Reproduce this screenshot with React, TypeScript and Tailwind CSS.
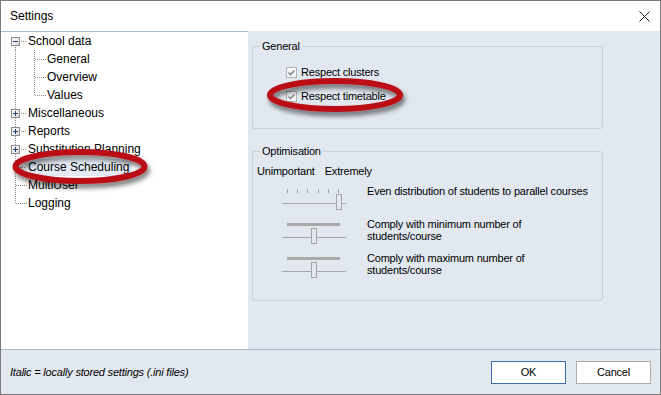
import React from 'react';

type TreeRow = {
  label: string;
  level: 0 | 1;
  box?: 'plus' | 'minus';
  first?: boolean;
  last?: boolean;
  lastChild?: boolean;
  selected?: boolean;
};

const rows: TreeRow[] = [
  { label: 'School data', level: 0, box: 'minus', first: true },
  { label: 'General', level: 1 },
  { label: 'Overview', level: 1 },
  { label: 'Values', level: 1, lastChild: true },
  { label: 'Miscellaneous', level: 0, box: 'plus' },
  { label: 'Reports', level: 0, box: 'plus' },
  { label: 'Substitution Planning', level: 0, box: 'plus' },
  { label: 'Course Scheduling', level: 0, selected: true },
  { label: 'MultiUser', level: 0 },
  { label: 'Logging', level: 0, last: true },
];

const DOT = '#8f8f8f';

// connector lines and +/- box for one tree row
const Gutter = ({ row }: { row: TreeRow }) => {
  const w = row.level === 0 ? 24 : 43;
  let vTop = 0;
  let vBottom = 18;
  if (row.level === 0 && row.first) vTop = 13;
  if (row.level === 0 && row.last) vBottom = 9;
  return (
    <svg width={w} height={18} className="shrink-0 overflow-visible" shapeRendering="crispEdges">
      <line x1={14.5} y1={vTop} x2={14.5} y2={vBottom} stroke={DOT} strokeDasharray="1 1" />
      {row.level === 0 ? (
        <line x1={row.box ? 18 : 15} y1={9.5} x2={26} y2={9.5} stroke={DOT} strokeDasharray="1 1" />
      ) : (
        <>
          <line x1={33.5} y1={0} x2={33.5} y2={row.lastChild ? 10 : 18} stroke={DOT} strokeDasharray="1 1" />
          <line x1={34} y1={9.5} x2={45} y2={9.5} stroke={DOT} strokeDasharray="1 1" />
        </>
      )}
      {row.box && (
        <>
          <defs>
            <linearGradient id="bx" x1="0" y1="0" x2="1" y2="1">
              <stop offset="0" stopColor="#ffffff" />
              <stop offset="1" stopColor="#d9d9d9" />
            </linearGradient>
          </defs>
          <rect x={10.5} y={5.5} width={8} height={8} fill="url(#bx)" stroke="#8c8c8c" />
          <line x1={12} y1={9.5} x2={17} y2={9.5} stroke="#263f75" />
          {row.box === 'plus' && <line x1={14.5} y1={7} x2={14.5} y2={12} stroke="#263f75" />}
        </>
      )}
    </svg>
  );
};

const CheckBox = () => (
  <svg width={11} height={11} className="shrink-0" shapeRendering="crispEdges">
    <rect x={0.5} y={0.5} width={10} height={10} fill="#f3f5f8" stroke="#b3b3b3" />
    <path d="M2.5 5.5 L4.5 7.5 L8.5 3.5" fill="none" stroke="#8a8a8a" strokeWidth={1.6} shapeRendering="auto" />
  </svg>
);

const Slider = ({ pos, ticks }: { pos: number; ticks?: boolean }) => (
  <svg width={64} height={28} className="shrink-0" shapeRendering="crispEdges">
    {ticks ? (
      [5, 15, 25, 36, 46, 56].map((x) => (
        <line key={x} x1={x + 0.5} y1={4} x2={x + 0.5} y2={8} stroke="#a6a6a6" />
      ))
    ) : (
      <rect x={5} y={4} width={53} height={3} fill="#a9a9a9" />
    )}
    <line x1={0} y1={18.5} x2={64} y2={18.5} stroke="#a6a6a6" />
    <rect x={pos + 0.5} y={9.5} width={5} height={15} fill="#e2e8f0" stroke="#a6a6a6" />
  </svg>
);

export default function App() {
  return (
    <div className="relative w-[661px] h-[395px] border border-[#7b7b7b] bg-[#e2e8f0] flex flex-col font-['Liberation_Sans',Arial,sans-serif] text-black overflow-hidden">
      {/* title bar */}
      <div className="h-[30px] bg-white flex items-center justify-between pl-[9px] pr-[9px] shrink-0">
        <span className="text-[12px]">Settings</span>
        <svg width={11} height={11} className="mr-[1px]">
          <path d="M0.5 0.5 L10.5 10.5 M10.5 0.5 L0.5 10.5" stroke="#222" strokeWidth={1} />
        </svg>
      </div>

      <div className="flex h-[318px] shrink-0">
        {/* tree */}
        <div className="w-[247px] bg-white border-t border-[#a9bcd5] flex flex-col text-[12px]">
          {rows.map((r) => (
            <div key={r.label} className="h-[18px] flex items-center">
              <Gutter row={r} />
              <span className={`px-[3px] leading-[17px] ${r.selected ? 'bg-[#e3eaf3]' : ''}`}>{r.label}</span>
            </div>
          ))}
        </div>

        {/* options */}
        <div className="flex-1 pl-[4px] pt-[9px] text-[11px] tracking-[-0.2px] leading-[12px]">
          <fieldset className="w-[351px] border border-[#c9d0da] rounded-[3px] pb-[24px]">
            <legend className="ml-[7px] px-[2px] leading-[13px]">General</legend>
            <div className="mt-[11px] flex flex-col gap-[8px] pl-[33px]">
              <div className="h-[16px] flex items-center gap-[4px]">
                <CheckBox />
                <span>Respect clusters</span>
              </div>
              <div className="h-[16px] flex items-center gap-[4px]">
                <CheckBox />
                <span>Respect timetable</span>
              </div>
            </div>
          </fieldset>

          <fieldset className="mt-[16px] w-[351px] border border-[#c9d0da] rounded-[3px] pb-[19px]">
            <legend className="ml-[7px] px-[2px] leading-[13px]">Optimisation</legend>
            <div className="mt-[7px] pl-[4px] flex leading-[13px]">
              <span>Unimportant</span>
              <span className="ml-[10px]">Extremely</span>
            </div>
            <div className="mt-[7px] flex flex-col gap-[6px]">
              <div className="flex pl-[29px]">
                <Slider pos={54} ticks />
                <div className="ml-[21px]">Even distribution of students to parallel courses</div>
              </div>
              <div className="flex pl-[29px]">
                <Slider pos={29} />
                <div className="ml-[21px] -mt-[1px]">
                  Comply with minimum number of
                  <br />
                  students/course
                </div>
              </div>
              <div className="flex pl-[29px]">
                <Slider pos={29} />
                <div className="ml-[21px] -mt-[1px]">
                  Comply with maximum number of
                  <br />
                  students/course
                </div>
              </div>
            </div>
          </fieldset>
        </div>
      </div>

      {/* footer */}
      <div className="flex-1 border-t border-[#a9bcd5] flex items-center justify-between pl-[9px] pr-[9px] text-[11px] tracking-[-0.2px]">
        <span className="italic">Italic = locally stored settings (.ini files)</span>
        <div className="flex gap-[10px]">
          <button className="w-[75px] h-[23px] bg-white border border-[#3d6db0]">OK</button>
          <button className="w-[75px] h-[23px] bg-white border border-[#adadad]">Cancel</button>
        </div>
      </div>

      {/* red highlight rings */}
      <svg className="absolute left-[-1px] top-[-1px] w-[661px] h-[395px] pointer-events-none" viewBox="0 0 661 395">
        <defs>
          <filter id="sh" x="-20%" y="-60%" width="140%" height="220%">
            <feDropShadow dx="2" dy="4" stdDeviation="2.5" floodColor="#000" floodOpacity="0.55" />
          </filter>
        </defs>
        <ellipse cx={80} cy={166.5} rx={64.5} ry={14.5} fill="none" stroke="#bb0f18" strokeWidth={6} filter="url(#sh)" />
        <ellipse cx={335} cy={95} rx={65} ry={14} fill="none" stroke="#bb0f18" strokeWidth={6} filter="url(#sh)" />
      </svg>
    </div>
  );
}
